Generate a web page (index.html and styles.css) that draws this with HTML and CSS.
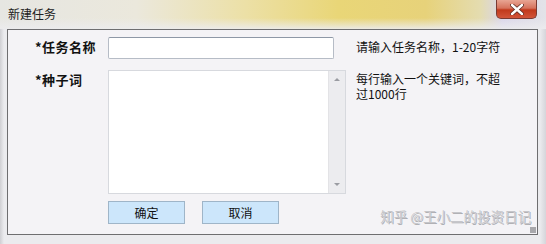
FILE: index.html
```html
<!DOCTYPE html>
<html>
<head>
<meta charset="utf-8">
<link rel="stylesheet" href="styles.css">
</head>
<body>
<div class="window">
  <div class="titlebar">
    <span class="title">新建任务</span>
    <div class="close">
      <svg width="14" height="11" viewBox="0 0 14 11"><path d="M2 1 L12 10 M12 1 L2 10" stroke="#5a2a22" stroke-width="4" stroke-linecap="round"/><path d="M2 1 L12 10 M12 1 L2 10" stroke="#fff" stroke-width="2.4" stroke-linecap="round"/></svg>
    </div>
  </div>
  <div class="client">
    <div class="form">
      <div class="row">
        <div class="label">*任务名称</div>
        <div class="input"></div>
        <div class="hint hint-one">请输入任务名称，1-20字符</div>
      </div>
      <div class="row row-area">
        <div class="label">*种子词</div>
        <div class="textarea">
          <div class="area-body"></div>
          <div class="scrollbar">
            <span class="arrow up"></span>
            <span class="arrow down"></span>
          </div>
        </div>
        <div class="hint">每行输入一个关键词，不超<br>过1000行</div>
      </div>
      <div class="buttons">
        <div class="btn">确定</div>
        <div class="btn">取消</div>
      </div>
    </div>
    <div class="watermark">知乎 @王小二的投资日记</div>
    <div class="grip"></div>
  </div>
</div>
</body>
</html>
```
FILE: styles.css
```css
html, body {
  margin: 0;
  padding: 0;
  background: #e9e9ed;
}
.window {
  width: 546px;
  height: 244px;
  box-sizing: border-box;
  padding: 0 8px 9px 7px;
  display: flex;
  flex-direction: column;
  background: linear-gradient(90deg, #cfcfd3 0px, #ebebee 4px, #ebebee 540px, #d5d5da 546px);
  font-family: "Noto Sans CJK SC", sans-serif;
  overflow: hidden;
}
.titlebar {
  height: 29px;
  margin: 0 -8px 0 -7px;
  padding: 0 8px 0 8px;
  display: flex;
  justify-content: space-between;
  align-items: flex-start;
  background:
    linear-gradient(180deg, rgba(255,255,255,0) 0px, rgba(255,255,255,0) 18px, rgba(236,236,238,0.9) 29px),
    linear-gradient(90deg, #e6e6e2 0%, #ebe8dc 25%, #ece0a6 45%, #e9d677 62%, #e7d27a 78%, #e4dcb0 88%, #d9d5ea 92%, #e3e3e8 100%);
}
.title {
  font-size: 12px;
  color: #222;
  line-height: 14px;
  margin-top: 7px;
}
.close {
  width: 41px;
  height: 19px;
  margin-right: 1px;
  box-sizing: border-box;
  border: 1px solid #7a3a32;
  border-top: none;
  border-radius: 0 0 5px 5px;
  background: linear-gradient(180deg, #e8a593 0%, #d6735d 45%, #c1391c 55%, #d2553a 100%);
  display: flex;
  align-items: center;
  justify-content: center;
}
.client {
  flex: 1;
  position: relative;
  border: 1px solid #6e6e70;
  background: #f4f3f6;
}
.form {
  padding: 7px 0 0 27px;
  display: flex;
  flex-direction: column;
}
.row {
  display: flex;
  align-items: flex-start;
}
.label {
  width: 73px;
  font-size: 13px;
  font-weight: bold;
  color: #111;
  line-height: 17px;
  margin-top: 1px;
  letter-spacing: 0.5px;
}
.input {
  width: 226px;
  height: 22px;
  box-sizing: border-box;
  border: 1px solid #b6bcc6;
  border-top-color: #8e98a6;
  border-radius: 2px;
  background: #fff;
}
.hint {
  font-size: 12px;
  color: #111;
  line-height: 15px;
  margin-left: 10px;
  margin-top: 1px;
}
.hint-one {
  margin-left: 22px;
  margin-top: 2px;
}
.row-area {
  margin-top: 11px;
}
.textarea {
  width: 238px;
  height: 124px;
  box-sizing: border-box;
  border: 1px solid #d7d9de;
  background: #fff;
  display: flex;
}
.area-body {
  flex: 1;
}
.scrollbar {
  width: 16px;
  background: #ececef;
  border-left: 1px solid #e3e3e6;
  display: flex;
  flex-direction: column;
  justify-content: space-between;
  align-items: center;
  padding: 7px 0 7px;
}
.arrow {
  width: 0;
  height: 0;
  border-left: 3px solid transparent;
  border-right: 3px solid transparent;
}
.arrow.up {
  border-bottom: 3px solid #9a9ca2;
}
.arrow.down {
  border-top: 3px solid #9a9ca2;
}
.buttons {
  display: flex;
  gap: 17px;
  margin-top: 7px;
  margin-left: 73px;
}
.btn {
  width: 77px;
  height: 23px;
  box-sizing: border-box;
  border: 1px solid #9fb5c8;
  background: #cce6fb;
  font-size: 12px;
  color: #111;
  display: flex;
  align-items: center;
  justify-content: center;
}
.watermark {
  position: absolute;
  right: 6px;
  bottom: 8px;
  font-size: 13.5px;
  color: #c6c6ca;
  text-shadow: 0 0 1px #fff, 1px 1px 0 #a9a9ad;
}
.grip {
  position: absolute;
  right: 1px;
  bottom: 1px;
  width: 6px;
  height: 6px;
  background: radial-gradient(circle, #a8a8ac 0.8px, transparent 1px) 0 0 / 2px 2px;
}
```
